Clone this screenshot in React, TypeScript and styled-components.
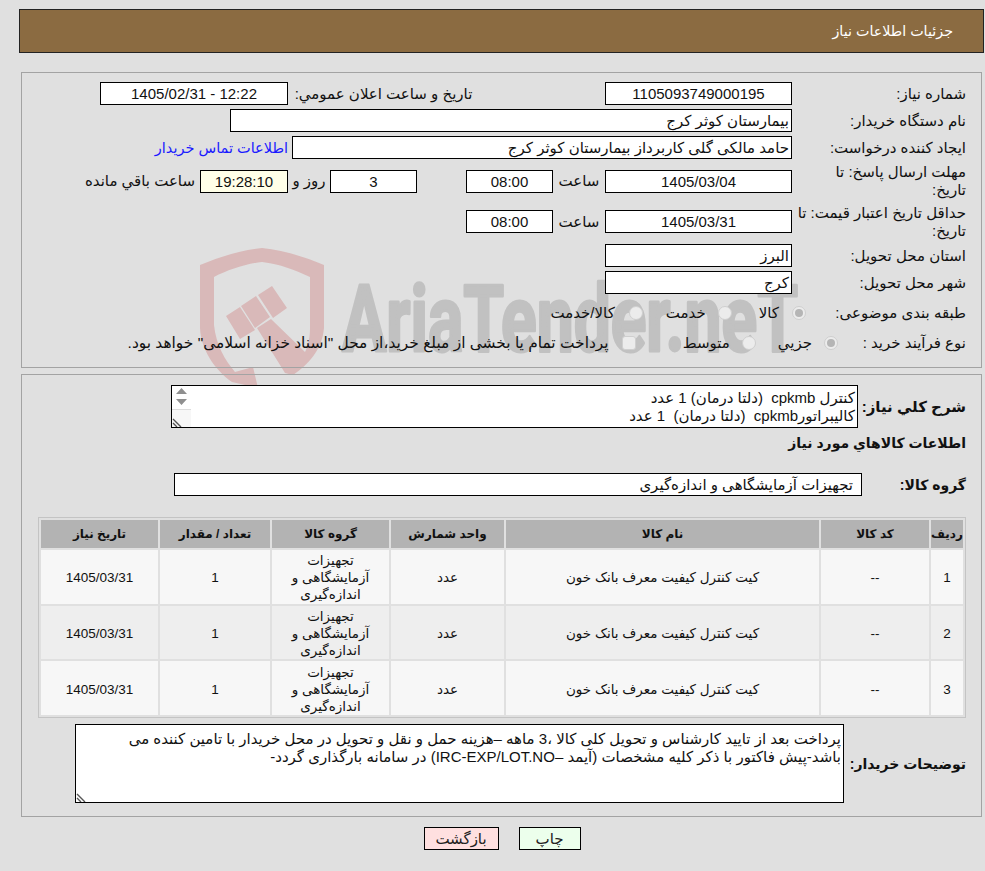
import React from "react";
import styled, { createGlobalStyle } from "styled-components";

const GlobalStyle = createGlobalStyle`
  html, body {
    margin: 0;
    padding: 0;
    background: #e0e0e0;
  }
  body {
    font-family: "Liberation Sans", "DejaVu Sans", sans-serif;
    font-size: 15px;
    color: #111;
  }
`;

const Page = styled.div`
  position: relative;
  direction: rtl;
  width: 985px;
  height: 871px;
  overflow: hidden;
  padding-top: 9px;
  box-sizing: border-box;
`;

const Watermark = styled.svg`
  position: absolute;
  left: 0;
  top: 0;
  z-index: 0;
`;

const Content = styled.div`
  position: relative;
  z-index: 1;
`;

const TitleBar = styled.div`
  height: 44px;
  margin: 0 1px 0 19px;
  padding-right: 30px;
  display: flex;
  align-items: center;
  background: #8b6b41;
  border: 1px solid #222;
  box-sizing: border-box;
  color: #fff;
  font-size: 14.3px;
`;

const Panel = styled.div<{ $top: number; $height: number; $pad: number }>`
  height: ${(p) => p.$height}px;
  margin: ${(p) => p.$top}px 3px 0 21px;
  padding: ${(p) => p.$pad}px 15px 0 0;
  border: 1px solid #a3a3a3;
  box-sizing: border-box;
  display: flex;
  flex-direction: column;
  gap: 4px;
`;

const Row = styled.div<{ $height?: number; $top?: number }>`
  display: flex;
  align-items: center;
  height: ${(p) => p.$height || 23}px;
  margin-top: ${(p) => p.$top || 0}px;
  flex-shrink: 0;
`;

const Label = styled.div`
  width: 170px;
  margin-left: 4px;
  flex-shrink: 0;
  line-height: 18px;
  white-space: nowrap;
`;

const Field = styled.div<{ $width: number; $left?: boolean; $warm?: boolean; $gap?: number; $pad?: number }>`
  width: ${(p) => p.$width}px;
  height: 23px;
  margin-right: ${(p) => p.$gap || 0}px;
  flex-shrink: 0;
  box-sizing: border-box;
  border: 1px solid #000;
  background: ${(p) => (p.$warm ? "#ffffe8" : "#fff")};
  text-align: ${(p) => (p.$left ? "right" : "center")};
  padding: 0 ${(p) => p.$pad || (p.$left ? 2 : 0)}px 0 0;
  line-height: 21px;
  white-space: nowrap;
  overflow: hidden;
`;

const Inline = styled.div<{ $width?: number; $gap?: number }>`
  width: ${(p) => (p.$width ? `${p.$width}px` : "auto")};
  margin-right: ${(p) => p.$gap || 0}px;
  flex-shrink: 0;
  white-space: nowrap;
  text-align: center;
`;

const ContactLink = styled.a`
  margin-right: 4px;
  color: #1a1aff;
  font-size: 14.5px;
  white-space: nowrap;
  text-decoration: none;
`;

const RadioMark = styled.span<{ $on?: boolean; $gap?: number; $square?: boolean }>`
  width: 14px;
  height: 14px;
  margin-right: ${(p) => p.$gap || 0}px;
  flex-shrink: 0;
  box-sizing: border-box;
  display: flex;
  align-items: center;
  justify-content: center;
  border-radius: ${(p) => (p.$square ? "3px" : "50%")};
  border: 1px solid #cfcfcf;
  background: #ececec;
  &::after {
    content: "";
    width: 8px;
    height: 8px;
    border-radius: 50%;
    background: ${(p) => (p.$on ? "#b5b5b5" : "transparent")};
  }
`;

const OptionText = styled.span<{ $gap?: number; $size?: number }>`
  margin-right: ${(p) => p.$gap || 0}px;
  flex-shrink: 0;
  font-size: ${(p) => p.$size || 15}px;
  white-space: nowrap;
`;

const BoldLabel = styled.div<{ $width: number; $size?: number }>`
  width: ${(p) => p.$width}px;
  flex-shrink: 0;
  font-size: ${(p) => p.$size || 14}px;
  font-weight: bold;
  white-space: nowrap;
`;

const TextBox = styled.div<{ $width: number; $height: number; $pad: number }>`
  position: relative;
  width: ${(p) => p.$width}px;
  height: ${(p) => p.$height}px;
  flex-shrink: 0;
  box-sizing: border-box;
  border: 1px solid #000;
  background: #fff;
  padding: ${(p) => p.$pad}px 2px 0;
  line-height: 18px;
  overflow: hidden;
`;

const Scroller = styled.svg`
  position: absolute;
  left: 0;
  top: 0;
`;

const Grip = styled.svg`
  position: absolute;
  left: 0;
  bottom: 0;
`;

const Heading = styled.div`
  font-size: 14px;
  font-weight: bold;
  height: 20px;
  line-height: 20px;
`;

const GoodsTable = styled.table`
  width: 928px;
  height: 201px;
  margin-top: 17px;
  border: 1px solid #c4c4c4;
  border-spacing: 2px;
  border-collapse: separate;
  table-layout: fixed;
  box-sizing: border-box;
`;

const Head = styled.th<{ $width: number }>`
  width: ${(p) => p.$width}px;
  height: 28px;
  padding: 0;
  background: #b3b3b3;
  font-size: 12px;
  font-weight: bold;
  text-align: center;
`;

const Cell = styled.td<{ $even: boolean }>`
  height: 53px;
  padding: 2px 0 0;
  box-sizing: border-box;
  background: ${(p) => (p.$even ? "#eeeeee" : "#f7f7f7")};
  text-align: center;
  font-size: 13.5px;
  line-height: 17px;
`;

const GroupText = styled.div`
  width: 100px;
  margin: 0 auto;
`;

const ButtonBar = styled.div`
  display: flex;
  justify-content: center;
  gap: 20px;
  margin-top: 10px;
  padding-left: 19px;
`;

const ActionButton = styled.button<{ $tone: string; $width: number }>`
  width: ${(p) => p.$width}px;
  height: 23px;
  padding: 0;
  border: 1px solid #000;
  background: ${(p) => p.$tone};
  color: #222;
  font-family: inherit;
  font-size: 15px;
`;

const rows = [1, 2, 3];

const ResizeGrip = () => (
  <Grip width={10} height={10} viewBox="0 0 10 10">
    <path d="M1 2 L9 10 M1 6 L5 10" stroke="#555" strokeWidth={1.4} />
  </Grip>
);

export default function App() {
  return (
    <>
      <GlobalStyle />
      <Page>
        <Watermark width={985} height={871} viewBox="0 0 985 871">
          <path
            d="M262 248 C283 250 305 257 324 265 L324 328 C322 350 308 365 293 375 L285 373 L257 328 L271 319 L305 352 C309 345 310 335 310 328 L310 277 C295 270 280 264 262 262 C245 264 228 270 214 277 L214 325 C216 345 225 360 235 372 L253 367 L258 388 L232 382 C215 370 201 350 200 328 L200 265 C220 257 240 250 262 248 Z"
            fill="#d9b9b9"
          />
          <path
            d="M226 316 L240 307 L255 330 L240 339 Z M241 306 L256 296 L270 317 L255 328 Z M258 295 L272 286 L287 308 L273 318 Z"
            fill="#d9b9b9"
          />
          <text
            x={342}
            y={351}
            fontFamily="Roboto, sans-serif"
            fontWeight={700}
            fontSize={92}
            fill="#c1c1c1"
            stroke="#c1c1c1"
            strokeWidth={3}
            strokeLinejoin="round"
            textLength={456}
            lengthAdjust="spacingAndGlyphs"
            direction="ltr"
          >
            AriaTender.neT
          </text>
        </Watermark>
        <Content>
          <TitleBar>جزئیات اطلاعات نیاز</TitleBar>

          <Panel $top={19} $height={296} $pad={9}>
            <Row>
              <Label>شماره نیاز:</Label>
              <Field $width={187}>1105093749000195</Field>
              <Inline $gap={131} $width={181}>
                تاریخ و ساعت اعلان عمومي:
              </Inline>
              <Field $width={188} $gap={5}>
                12:22 - 1405/02/31
              </Field>
            </Row>
            <Row>
              <Label>نام دستگاه خریدار:</Label>
              <Field $width={562} $left>
                بیمارستان کوثر کرج
              </Field>
            </Row>
            <Row>
              <Label>ایجاد کننده درخواست:</Label>
              <Field $width={500} $left>
                حامد مالکی گلی کاربرداز بیمارستان کوثر کرج
              </Field>
              <ContactLink href="#">اطلاعات تماس خریدار</ContactLink>
            </Row>
            <Row $height={36}>
              <Label>
                مهلت ارسال پاسخ: تا
                <br />
                تاریخ:
              </Label>
              <Field $width={187}>1405/03/04</Field>
              <Inline $width={52}>ساعت</Inline>
              <Field $width={87}>08:00</Field>
              <Field $width={87} $gap={49}>
                3
              </Field>
              <Inline $width={42}>روز و</Inline>
              <Field $width={88} $warm>
                19:28:10
              </Field>
              <Inline $gap={5}>ساعت باقي مانده</Inline>
            </Row>
            <Row $height={37}>
              <Label>
                حداقل تاریخ اعتبار قیمت: تا
                <br />
                تاریخ:
              </Label>
              <Field $width={187}>1405/03/31</Field>
              <Inline $width={52}>ساعت</Inline>
              <Field $width={87}>08:00</Field>
            </Row>
            <Row>
              <Label>استان محل تحویل:</Label>
              <Field $width={187} $left>
                البرز
              </Field>
            </Row>
            <Row>
              <Label>شهر محل تحویل:</Label>
              <Field $width={187} $left>
                کرج
              </Field>
            </Row>
            <Row $height={30}>
              <Label>طبقه بندی موضوعی:</Label>
              <RadioMark $on $gap={-14} />
              <OptionText $gap={13}>کالا</OptionText>
              <RadioMark $gap={27} />
              <OptionText $gap={12}>خدمت</OptionText>
              <RadioMark $gap={23} />
              <OptionText $gap={14}>کالا/خدمت</OptionText>
            </Row>
            <Row $height={22}>
              <Label>نوع فرآیند خرید :</Label>
              <RadioMark $on $gap={-46} />
              <OptionText $gap={12}>جزيي</OptionText>
              <RadioMark $gap={22} />
              <OptionText $gap={12}>متوسط</OptionText>
              <RadioMark $square $gap={47} />
              <OptionText $gap={13} $size={15.45}>
                پرداخت تمام یا بخشی از مبلغ خرید،از محل "اسناد خزانه اسلامی" خواهد بود.
              </OptionText>
            </Row>
          </Panel>

          <Panel $top={6} $height={443} $pad={10}>
            <Row $height={43}>
              <BoldLabel $width={108} $size={15}>
                شرح کلي نیاز:
              </BoldLabel>
              <TextBox $width={687} $height={43} $pad={3}>
                کنترل cpkmb &nbsp;(دلتا درمان) 1 عدد
                <br />
                کالیبراتورcpkmb &nbsp;(دلتا درمان) &nbsp;1 عدد
                <Scroller width={19} height={41} viewBox="0 0 19 41">
                  <rect x={0} y={24} width={19} height={17} fill="#f7f7f7" />
                  <path d="M9.5 2 L15 8 L4 8 Z M4 13 L15 13 L9.5 19 Z" fill="#8f8f8f" />
                  <path d="M0 23.5 H19" stroke="#dcdcdc" />
                </Scroller>
                <ResizeGrip />
              </TextBox>
            </Row>
            <Row $height={20} $top={1}>
              <Heading>اطلاعات کالاهاي مورد نياز</Heading>
            </Row>
            <Row $top={16}>
              <BoldLabel $width={104}>گروه کالا:</BoldLabel>
              <Field $width={688} $left $pad={8}>
                تجهیزات آزمایشگاهی و اندازه‌گیری
              </Field>
            </Row>
            <GoodsTable>
              <thead>
                <tr>
                  <Head $width={32}>ردیف</Head>
                  <Head $width={108}>کد کالا</Head>
                  <Head $width={313}>نام کالا</Head>
                  <Head $width={113}>واحد شمارش</Head>
                  <Head $width={117}>گروه کالا</Head>
                  <Head $width={110}>تعداد / مقدار</Head>
                  <Head $width={117}>تاریخ نیاز</Head>
                </tr>
              </thead>
              <tbody>
                {rows.map((n) => (
                  <tr key={n}>
                    <Cell $even={n === 2}>{n}</Cell>
                    <Cell $even={n === 2}>--</Cell>
                    <Cell $even={n === 2}>کیت کنترل کیفیت معرف بانک خون</Cell>
                    <Cell $even={n === 2}>عدد</Cell>
                    <Cell $even={n === 2}>
                      <GroupText>تجهیزات آزمایشگاهی و اندازه‌گیری</GroupText>
                    </Cell>
                    <Cell $even={n === 2}>1</Cell>
                    <Cell $even={n === 2}>1405/03/31</Cell>
                  </tr>
                ))}
              </tbody>
            </GoodsTable>
            <Row $height={79} $top={2}>
              <BoldLabel $width={122}>توضیحات خریدار:</BoldLabel>
              <TextBox $width={769} $height={79} $pad={5}>
                پرداخت بعد از تایید کارشناس و تحویل کلی کالا ،3 ماهه –هزینه حمل و نقل و تحویل در محل خریدار با تامین کننده می
                <br />
                باشد-پیش فاکتور با ذکر کلیه مشخصات (آیمد –IRC-EXP/LOT.NO) در سامانه بارگذاری گردد-
                <ResizeGrip />
              </TextBox>
            </Row>
          </Panel>

          <ButtonBar>
            <ActionButton $tone="#ecffec" $width={62}>
              چاپ
            </ActionButton>
            <ActionButton $tone="#ffe0e0" $width={75}>
              بازگشت
            </ActionButton>
          </ButtonBar>
        </Content>
      </Page>
    </>
  );
}
